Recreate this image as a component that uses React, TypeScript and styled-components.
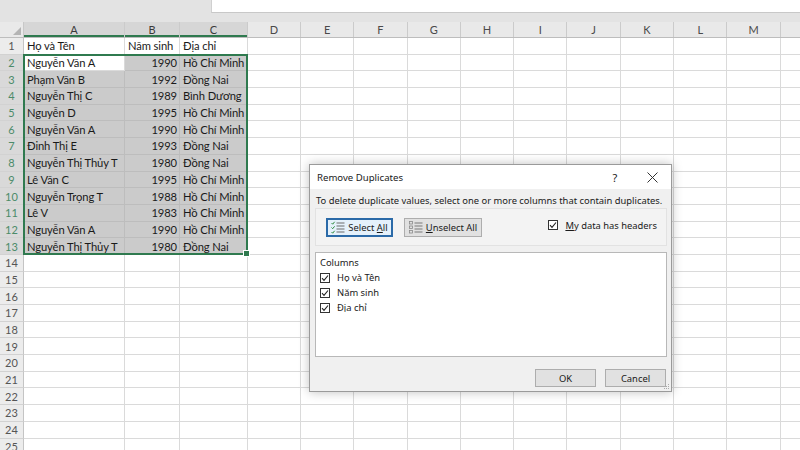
import React from 'react';
import styled, { createGlobalStyle } from 'styled-components';

const GlobalStyle = createGlobalStyle`
  html, body { margin: 0; padding: 0; background: #ffffff; }
  #root { width: 800px; height: 450px; overflow: hidden; }
`;

/* 시트 치수 */
const COL_WIDTHS = [24, 101, 55, 68, 53, 53.3, 53.3, 53.3, 53.3, 53.3, 53.3, 53.3, 53.3, 53.3, 40];
const GRID_COLS = COL_WIDTHS.map((w) => `${w}px`).join(' ');
const HEADER_H = 16;
const ROW_H = 16.7;
const LETTERS = ['A', 'B', 'C', 'D', 'E', 'F', 'G', 'H', 'I', 'J', 'K', 'L', 'M', ''];

const DATA: [string, string, string][] = [
  ['Họ và Tên', 'Năm sinh', 'Địa chỉ'],
  ['Nguyễn Văn A', '1990', 'Hồ Chí Minh'],
  ['Phạm Văn B', '1992', 'Đồng Nai'],
  ['Nguyễn Thị C', '1989', 'Bình Dương'],
  ['Nguyễn D', '1995', 'Hồ Chí Minh'],
  ['Nguyễn Văn A', '1990', 'Hồ Chí Minh'],
  ['Đinh Thị E', '1993', 'Đồng Nai'],
  ['Nguyễn Thị Thủy T', '1980', 'Đồng Nai'],
  ['Lê Văn C', '1995', 'Hồ Chí Minh'],
  ['Nguyễn Trọng T', '1988', 'Hồ Chí Minh'],
  ['Lê V', '1983', 'Hồ Chí Minh'],
  ['Nguyễn Văn A', '1990', 'Hồ Chí Minh'],
  ['Nguyễn Thị Thủy T', '1980', 'Đồng Nai'],
];
const ROW_COUNT = 25;

const isSelectedRow = (r: number) => r >= 2 && r <= 13;

/* 체크 아이콘 */
const Check = () => (
  <CheckBox>
    <svg width="8" height="8" viewBox="0 0 8 8">
      <path d="M1 4.2 L3 6.3 L7 1.5" fill="none" stroke="#222" strokeWidth="1.1" />
    </svg>
  </CheckBox>
);

const SelectAllIcon = () => (
  <svg width="14" height="13" viewBox="0 0 14 13">
    <path d="M0.5 2 L1.7 3.2 L3.6 0.8" fill="none" stroke="#2e8b3e" strokeWidth="1" />
    <path d="M0.5 6.5 L1.7 7.7 L3.6 5.3" fill="none" stroke="#2e8b3e" strokeWidth="1" />
    <path d="M0.5 11 L1.7 12.2 L3.6 9.8" fill="none" stroke="#2e8b3e" strokeWidth="1" />
    <rect x="5.5" y="1.5" width="8" height="1" fill="#6c6c6c" />
    <rect x="5.5" y="4.5" width="8" height="1" fill="#6c6c6c" />
    <rect x="5.5" y="7.5" width="8" height="1" fill="#6c6c6c" />
    <rect x="5.5" y="10.5" width="8" height="1" fill="#6c6c6c" />
  </svg>
);

const UnselectAllIcon = () => (
  <svg width="14" height="13" viewBox="0 0 14 13">
    <rect x="0.5" y="0.5" width="3" height="2.5" fill="none" stroke="#8a8a8a" strokeWidth="0.8" />
    <rect x="0.5" y="5" width="3" height="2.5" fill="none" stroke="#8a8a8a" strokeWidth="0.8" />
    <rect x="0.5" y="9.5" width="3" height="2.5" fill="none" stroke="#8a8a8a" strokeWidth="0.8" />
    <rect x="5.5" y="1.5" width="8" height="1" fill="#7a7a7a" />
    <rect x="5.5" y="4.5" width="8" height="1" fill="#7a7a7a" />
    <rect x="5.5" y="7.5" width="8" height="1" fill="#7a7a7a" />
    <rect x="5.5" y="10.5" width="8" height="1" fill="#7a7a7a" />
  </svg>
);

const App = () => {
  const rows = Array.from({ length: ROW_COUNT }, (_, i) => i + 1);
  const selLeft = COL_WIDTHS[0];
  const selWidth = COL_WIDTHS[1] + COL_WIDTHS[2] + COL_WIDTHS[3];
  const selTop = HEADER_H + ROW_H;
  const selHeight = ROW_H * 12;

  return (
    <Page>
      <GlobalStyle />
      <TopStrip>
        <FormulaBox />
      </TopStrip>
      <Sheet>
        <HeaderRow>
          <Corner>
            <svg width="8" height="8" viewBox="0 0 8 8">
              <path d="M8 0 L8 8 L0 8 Z" fill="#b4b4b4" />
            </svg>
          </Corner>
          {LETTERS.map((l, i) => (
            <ColHead key={i} $selected={i < 3}>
              {l}
            </ColHead>
          ))}
        </HeaderRow>
        {rows.map((r) => {
          const data = DATA[r - 1];
          const sel = isSelectedRow(r);
          return (
            <SheetRow key={r}>
              <RowHead $selected={sel}>{r}</RowHead>
              <Cell $selected={sel && r !== 2}>{data ? data[0] : ''}</Cell>
              <Cell $selected={sel} $right={r > 1}>
                {data ? data[1] : ''}
              </Cell>
              <Cell $selected={sel}>{data ? data[2] : ''}</Cell>
              {LETTERS.slice(3).map((_, i) => (
                <Cell key={i} />
              ))}
            </SheetRow>
          );
        })}
        <Selection
          style={{ left: selLeft - 1, top: selTop - 1, width: selWidth + 1, height: selHeight + 1 }}
        >
          <FillHandle />
        </Selection>
      </Sheet>

      <Dialog>
        <TitleBar>
          <TitleText>Remove Duplicates</TitleText>
          <TitleButtons>
            <HelpMark>?</HelpMark>
            <CloseMark>
              <svg width="11" height="11" viewBox="0 0 11 11">
                <path d="M0.5 0.5 L10.5 10.5 M10.5 0.5 L0.5 10.5" stroke="#333" strokeWidth="1" />
              </svg>
            </CloseMark>
          </TitleButtons>
        </TitleBar>
        <Body>
          <Intro>To delete duplicate values, select one or more columns that contain duplicates.</Intro>
          <Panel>
            <ToolButton $focused $width={67}>
              <SelectAllIcon />
              <span>
                Select <u>A</u>ll
              </span>
            </ToolButton>
            <ToolButton $width={78}>
              <UnselectAllIcon />
              <span>
                <u>U</u>nselect All
              </span>
            </ToolButton>
            <HeaderCheck>
              <Check />
              <span>
                <u>M</u>y data has headers
              </span>
            </HeaderCheck>
          </Panel>
          <ListBox>
            <ListTitle>Columns</ListTitle>
            {DATA[0].map((name) => (
              <ListItem key={name}>
                <Check />
                <span>{name}</span>
              </ListItem>
            ))}
          </ListBox>
          <Footer>
            <DialogButton>OK</DialogButton>
            <DialogButton>Cancel</DialogButton>
          </Footer>
        </Body>
        <Grip>
          <svg width="6" height="6" viewBox="0 0 6 6">
            <rect x="4" y="0" width="1" height="1" fill="#aaa" />
            <rect x="2" y="2" width="1" height="1" fill="#aaa" />
            <rect x="4" y="2" width="1" height="1" fill="#aaa" />
            <rect x="0" y="4" width="1" height="1" fill="#aaa" />
            <rect x="2" y="4" width="1" height="1" fill="#aaa" />
            <rect x="4" y="4" width="1" height="1" fill="#aaa" />
          </svg>
        </Grip>
      </Dialog>
    </Page>
  );
};

export default App;

/* Page */
const Page = styled.div`
  position: relative;
  width: 800px;
  height: 450px;
  overflow: hidden;
  background: #ffffff;
`;

/* 상단 수식 영역 */
const TopStrip = styled.div`
  height: 22px;
  background: #e3e3e3;
  display: flex;
  justify-content: flex-end;
  align-items: flex-start;
`;

const FormulaBox = styled.div`
  width: 588px;
  height: 12px;
  background: #ffffff;
  border-left: 1px solid #d0d0d0;
  border-bottom: 1px solid #c8c8c8;
`;

/* 시트 */
const Sheet = styled.div`
  position: relative;
  font-family: Lato, 'Open Sans', sans-serif;
  font-size: 11.2px;
  letter-spacing: -0.1px;
  color: #1a1a1a;
`;

const HeaderRow = styled.div`
  display: grid;
  grid-template-columns: ${GRID_COLS};
  height: ${HEADER_H}px;
  background: #e9e9e9;
  border-bottom: 1px solid #bdbdbd;
  box-sizing: border-box;
`;

const Corner = styled.div`
  display: flex;
  align-items: flex-end;
  justify-content: flex-end;
  padding: 0 2px 2px 0;
  border-right: 1px solid #c8c8c8;
`;

const ColHead = styled.div<{ $selected?: boolean }>`
  display: flex;
  align-items: center;
  justify-content: center;
  font-size: 11px;
  letter-spacing: 0;
  color: ${(p) => (p.$selected ? '#3a3a3a' : '#4a4a4a')};
  background: ${(p) => (p.$selected ? '#d6d6d6' : 'transparent')};
  border-right: 1px solid #cbcbcb;
  box-shadow: ${(p) => (p.$selected ? 'inset 0 -2px 0 #2f7a4f' : 'none')};
`;

const SheetRow = styled.div`
  display: grid;
  grid-template-columns: ${GRID_COLS};
  height: ${ROW_H}px;
`;

const RowHead = styled.div<{ $selected?: boolean }>`
  display: flex;
  align-items: center;
  justify-content: center;
  font-size: 11px;
  letter-spacing: 0;
  color: ${(p) => (p.$selected ? '#4b8b69' : '#555555')};
  background: ${(p) => (p.$selected ? '#d9d9d9' : '#ececec')};
  border-bottom: 1px solid #d2d2d2;
  border-right: 1px solid ${(p) => (p.$selected ? '#2f7a4f' : '#c4c4c4')};
  box-sizing: border-box;
`;

const Cell = styled.div<{ $selected?: boolean; $right?: boolean }>`
  display: flex;
  align-items: center;
  justify-content: ${(p) => (p.$right ? 'flex-end' : 'flex-start')};
  padding: 0 2px 0 3px;
  white-space: nowrap;
  overflow: hidden;
  background: ${(p) => (p.$selected ? '#cbcbcb' : '#ffffff')};
  border-right: 1px solid ${(p) => (p.$selected ? '#bdbdbd' : '#dadada')};
  border-bottom: 1px solid ${(p) => (p.$selected ? '#bdbdbd' : '#dadada')};
  box-sizing: border-box;
  min-width: 0;
`;

const Selection = styled.div`
  position: absolute;
  border: 2px solid #2f7a4f;
  box-sizing: border-box;
  pointer-events: none;
`;

const FillHandle = styled.div`
  position: absolute;
  right: -4px;
  bottom: -4px;
  width: 5px;
  height: 5px;
  background: #2f7a4f;
  border: 1px solid #ffffff;
`;

/* 대화상자 */
const Dialog = styled.div`
  position: absolute;
  left: 309px;
  top: 164px;
  width: 363px;
  height: 228px;
  box-sizing: border-box;
  border: 1px solid #9a9a9a;
  background: #f0f0f0;
  box-shadow: 0 0 10px rgba(0, 0, 0, 0.25);
  font-family: 'Noto Sans', 'Open Sans', sans-serif;
  font-size: 9.4px;
  color: #1a1a1a;
  display: flex;
  flex-direction: column;
`;

const TitleBar = styled.div`
  height: 24px;
  flex: none;
  background: #ffffff;
  display: flex;
  align-items: center;
  justify-content: space-between;
  padding-left: 7px;
`;

const TitleText = styled.span`
  font-size: 9.6px;
  color: #1a1a1a;
`;

const TitleButtons = styled.div`
  display: flex;
  align-items: center;
  height: 100%;
`;

const HelpMark = styled.span`
  width: 36px;
  text-align: center;
  font-size: 11px;
  color: #222;
`;

const CloseMark = styled.span`
  width: 38px;
  display: flex;
  justify-content: center;
`;

const Body = styled.div`
  flex: 1;
  display: flex;
  flex-direction: column;
  padding: 0 4px 0 5px;
`;

const Intro = styled.div`
  height: 19px;
  line-height: 23px;
  padding-left: 1px;
  white-space: nowrap;
`;

const Panel = styled.div`
  height: 38px;
  display: flex;
  align-items: center;
  border: 1px solid #e2e2e2;
  background: #f3f3f3;
  padding-left: 10px;
  box-sizing: border-box;
`;

const ToolButton = styled.div<{ $focused?: boolean; $width: number }>`
  width: ${(p) => p.$width}px;
  height: 19px;
  box-sizing: border-box;
  display: flex;
  align-items: center;
  justify-content: center;
  gap: 3px;
  margin-right: 11px;
  background: ${(p) => (p.$focused ? '#e5f1fb' : '#e1e1e1')};
  border: ${(p) => (p.$focused ? '2px solid #2b6aa8' : '1px solid #adadad')};
`;

const HeaderCheck = styled.div`
  margin-left: auto;
  margin-right: 9px;
  margin-top: -4px;
  display: flex;
  align-items: center;
  gap: 7px;
`;

const CheckBox = styled.span`
  width: 10px;
  height: 10px;
  box-sizing: border-box;
  border: 1px solid #333;
  background: #ffffff;
  display: inline-flex;
  align-items: center;
  justify-content: center;
  flex: none;
`;

const ListBox = styled.div`
  margin-top: 6px;
  height: 105px;
  box-sizing: border-box;
  background: #ffffff;
  border: 1px solid #b8b8b8;
  padding: 3px 0 0 4px;
`;

const ListTitle = styled.div`
  height: 14px;
  line-height: 14px;
`;

const ListItem = styled.div`
  height: 15px;
  display: flex;
  align-items: center;
  gap: 7px;
`;

const Footer = styled.div`
  display: flex;
  justify-content: flex-end;
  gap: 9px;
  margin-top: 12px;
  padding-right: 1px;
`;

const DialogButton = styled.div`
  width: 61px;
  height: 18px;
  box-sizing: border-box;
  border: 1px solid #adadad;
  background: #e1e1e1;
  display: flex;
  align-items: center;
  justify-content: center;
`;

const Grip = styled.div`
  position: absolute;
  right: 1px;
  bottom: 1px;
  line-height: 0;
`;
